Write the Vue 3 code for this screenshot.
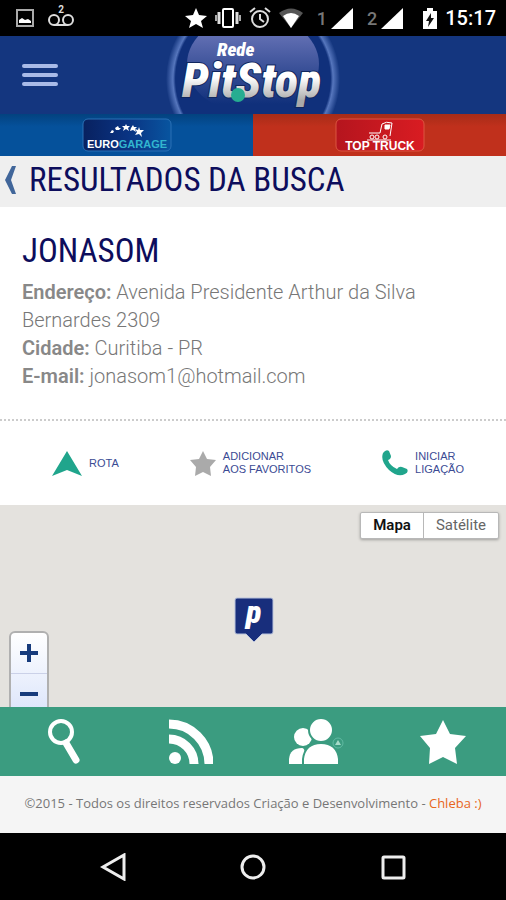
<script setup>
import { ref } from 'vue';

const mapType = ref('mapa');

const store = {
  name: 'JONASOM',
  address: 'Avenida Presidente Arthur da Silva Bernardes 2309',
  city: 'Curitiba - PR',
  email: 'jonasom1@hotmail.com'
};
</script>

<template>
  <div class="screen">
    <!-- Status bar -->
    <div class="status">
      <svg width="18" height="18" viewBox="0 0 18 18">
        <rect x="1" y="1" width="16" height="16" fill="none" stroke="#aaa" stroke-width="2" />
        <path d="M3 14v-3l3-2 3 2 3-1 3 2v2z" fill="#fff" />
      </svg>
      <svg class="voicemail" width="26" height="22" viewBox="0 0 26 22">
        <g fill="none" stroke="#ddd" stroke-width="2">
          <circle cx="6" cy="15" r="5" />
          <circle cx="20" cy="15" r="5" />
          <path d="M6 20h14" />
        </g>
        <text x="13" y="8" text-anchor="middle" font-size="10" font-weight="700" fill="#ddd">2</text>
      </svg>
      <div class="status-right">
        <svg width="22" height="20" viewBox="0 0 22 20">
          <path d="M11 0l3 7 8 1-6 5 2 7-7-4-7 4 2-7-6-5 8-1z" fill="#fff" />
        </svg>
        <svg width="26" height="20" viewBox="0 0 26 20">
          <rect x="8" y="1" width="10" height="18" rx="1" fill="none" stroke="#fff" stroke-width="2" />
          <path d="M4 4v12M22 4v12" stroke="#ddd" stroke-width="3" />
          <path d="M1 7v6M25 7v6" stroke="#aaa" stroke-width="2" />
        </svg>
        <svg width="22" height="22" viewBox="0 0 22 22" fill="none" stroke="#ddd" stroke-width="2">
          <circle cx="11" cy="12" r="8" />
          <path d="M11 7v5l4 3M1 5l5-4M21 5l-5-4" />
        </svg>
        <svg width="24" height="20" viewBox="0 0 24 20">
          <path d="M0 5Q12-4 24 5L12 20z" fill="#555" />
          <path d="M4 8q8-6 16 0l-8 12z" fill="#fff" />
        </svg>
        <span class="sim">
          <small>1</small>
          <svg width="22" height="21" viewBox="0 0 22 21"><path d="M22 0v21H0z" fill="#fff" /></svg>
        </span>
        <span class="sim">
          <small>2</small>
          <svg width="22" height="21" viewBox="0 0 22 21"><path d="M22 0v21H0z" fill="#fff" /></svg>
        </span>
        <svg class="battery" width="14" height="21" viewBox="0 0 14 21">
          <path d="M0 3h4V0h6v3h4v18H0z" fill="#fff" />
          <path d="M8 5l-5 8h3l-1 6 6-9H8z" fill="#111" />
        </svg>
        <span class="clock">15:17</span>
      </div>
    </div>

    <!-- Header -->
    <header class="header">
      <button class="menu" aria-label="Menu">
        <span></span>
        <span></span>
        <span></span>
      </button>
      <svg class="logo" width="180" height="78" viewBox="0 0 180 78" role="img" aria-label="Rede PitStop">
        <defs>
          <radialGradient id="ring">
            <stop offset="0.89" stop-color="#10307b" />
            <stop offset="0.92" stop-color="#5676bd" />
            <stop offset="1" stop-color="#14367f" />
          </radialGradient>
          <linearGradient id="gloss" x1="0" y1="0" x2="0" y2="1">
            <stop offset="0.2" stop-color="#6370b4" />
            <stop offset="0.9" stop-color="#10307b" />
          </linearGradient>
          <linearGradient id="metal" x1="0" y1="0" x2="0" y2="1">
            <stop offset="0.45" stop-color="#fff" />
            <stop offset="0.85" stop-color="#aaa" />
          </linearGradient>
        </defs>
        <circle cx="90" cy="43" r="87" fill="url(#ring)" />
        <ellipse cx="90" cy="28" rx="66" ry="50" fill="url(#gloss)" />
        <text class="logo-small" x="54" y="20" font-size="19">Rede</text>
        <text class="logo-big" x="19" y="61" font-size="48">PitStop</text>
        <circle cx="75" cy="59" r="7" fill="#26ad91" />
      </svg>
    </header>

    <!-- Partner brands -->
    <nav class="brands">
      <a href="#" class="brand euro" aria-label="Eurogarage">
        <svg width="90" height="34" viewBox="0 0 90 34">
          <defs>
            <linearGradient id="euroBg" x1="0" x2="1">
              <stop offset="0" stop-color="#08215f" />
              <stop offset="0.5" stop-color="#0a3382" />
              <stop offset="1" stop-color="#0855a0" />
            </linearGradient>
          </defs>
          <rect x="1" y="1" width="88" height="32" rx="5" fill="url(#euroBg)" stroke="#2a70b5" />
          <g fill="#fff">
            <path d="M44 6l1 2h3l-2 2 1 3-3-2-3 2 1-3-2-2h3z" />
            <path d="M57 9l1 3 4 0-3 3 1 4-3-3-4 1 2-3-2-3 3 1z" />
            <path d="M36 8l1 2 2 0-2 2-3 0-1-2z" />
            <path d="M30 12l2 1-1 2-3 0z" />
            <path d="M51 7l1 2 3 0-2 2 1 3-3-2-3 1 1-3z" />
          </g>
          <text x="45" y="30" text-anchor="middle" class="brand-text" font-size="11" fill="#fff">EURO<tspan fill="#32b6cf">GARAGE</tspan></text>
        </svg>
      </a>
      <a href="#" class="brand truck" aria-label="Top Truck">
        <svg width="90" height="34" viewBox="0 0 90 34">
          <defs>
            <linearGradient id="truckBg" x1="0" x2="1">
              <stop offset="0" stop-color="#b5151e" />
              <stop offset="1" stop-color="#d91c22" />
            </linearGradient>
          </defs>
          <rect x="1" y="1" width="88" height="32" rx="5" fill="url(#truckBg)" stroke="#dc5540" />
          <g fill="none" stroke="#fff" stroke-width="1">
            <path d="M34 15h11l2-9q4-3 10-1l-2 13M32 22h24" />
            <path d="M50 7h5l-1 4h-4z" fill="#fff" />
            <circle cx="37" cy="19" r="2" />
            <circle cx="42" cy="19" r="2" />
            <circle cx="50" cy="19" r="2" />
          </g>
          <text x="45" y="32" text-anchor="middle" class="brand-text" font-size="12" fill="#fff">TOP TRUCK</text>
        </svg>
      </a>
    </nav>

    <!-- Page title -->
    <div class="title-bar">
      <button class="back" aria-label="Voltar">
        <svg width="11" height="28" viewBox="0 0 11 28">
          <path d="M7 0h4L6 14l5 14H7L0 14z" fill="#41669a" />
        </svg>
      </button>
      <h1>RESULTADOS DA BUSCA</h1>
    </div>

    <section class="details">
      <h2>{{ store.name }}</h2>
      <p><strong>Endereço:</strong> {{ store.address }}</p>
      <p><strong>Cidade:</strong> {{ store.city }}</p>
      <p><strong>E-mail:</strong> {{ store.email }}</p>
    </section>

    <div class="actions">
      <button class="action">
        <svg width="30" height="25" viewBox="0 0 30 25">
          <path d="M15 0l15 25-15-6-15 6z" fill="#20a58c" />
        </svg>
        <span>ROTA</span>
      </button>
      <button class="action">
        <svg width="26" height="25" viewBox="0 0 26 25">
          <path d="M13 0l4 8 9 1-6 7 1 9-8-4-8 4 1-9-6-7 9-1z" fill="#aaa" />
        </svg>
        <span>ADICIONAR<br />AOS FAVORITOS</span>
      </button>
      <button class="action">
        <svg width="26" height="26" viewBox="0 0 26 26">
          <path d="M1 3q3-4 6-2l2 5q0 3-3 4 2 6 9 9 2-3 5-2l5 2q2 3-2 5-7 4-16-4Q-2 11 1 3z" fill="#20a58c" />
        </svg>
        <span>INICIAR<br />LIGAÇÃO</span>
      </button>
    </div>

    <!-- Map -->
    <section class="map">
      <div class="map-types">
        <button :class="{ active: mapType === 'mapa' }" @click="mapType = 'mapa'">Mapa</button>
        <button :class="{ active: mapType === 'satelite' }" @click="mapType = 'satelite'">Satélite</button>
      </div>
      <svg class="pin" width="42" height="50" viewBox="0 0 42 50">
        <path d="M4 2h34q2 0 2 2v32q0 2-2 2h-9l-8 8-8-8H4q-2 0-2-2V4q0-2 2-2z" fill="#182e7c" stroke="#b9c3dc" />
        <text class="logo-small pin-text" x="13" y="27" font-size="32">p</text>
      </svg>
      <div class="zoom">
        <button aria-label="Aumentar zoom">
          <svg width="20" height="20" viewBox="0 0 20 20"><path d="M10 1v18M1 10h18" stroke="#173b7c" stroke-width="4" /></svg>
        </button>
        <button aria-label="Diminuir zoom">
          <svg width="20" height="20" viewBox="0 0 20 20"><path d="M1 10h18" stroke="#173b7c" stroke-width="4" /></svg>
        </button>
      </div>
    </section>

    <!-- Bottom tabs -->
    <nav class="tabs">
      <a href="#" aria-label="Buscar">
        <svg width="46" height="46" viewBox="0 0 46 46" fill="none" stroke="#fff">
          <circle cx="21" cy="13" r="11" stroke-width="4" />
          <path d="M26 24l10 17" stroke-width="7" stroke-linecap="round" />
        </svg>
      </a>
      <a href="#" aria-label="Notícias">
        <svg width="46" height="46" viewBox="0 0 46 46">
          <circle cx="8" cy="39" r="6" fill="#fff" />
          <path d="M2 5a40 40 0 0 1 40 40M2 20a25 25 0 0 1 25 25" fill="none" stroke="#fff" stroke-width="9" />
        </svg>
      </a>
      <a href="#" aria-label="Amigos">
        <svg width="56" height="46" viewBox="0 0 56 46" fill="#fff">
          <circle cx="15" cy="18" r="9" />
          <path d="M1 45V40Q2 29 14 29q4 0 4 16z" />
          <g stroke="#3b9c80" stroke-width="2">
            <circle cx="33" cy="11" r="12" />
            <path d="M15 46V40Q17 24 33 24t18 16v6z" />
          </g>
          <circle cx="50" cy="24" r="5" fill="none" stroke="#61bba3" />
          <path d="M47 26l3-5 3 5z" fill="#a5dac8" />
        </svg>
      </a>
      <a href="#" aria-label="Favoritos">
        <svg width="46" height="44" viewBox="0 0 46 44">
          <path d="M23 0l7 14 16 2-11 12 2 16-14-7-14 7 1-16L0 16l16-2z" fill="#fff" />
        </svg>
      </a>
    </nav>

    <footer class="footer">©2015 - Todos os direitos reservados Criação e Desenvolvimento - <a href="#">Chleba :)</a></footer>

    <!-- System navigation -->
    <div class="system">
      <button aria-label="Voltar">
        <svg width="26" height="28" viewBox="0 0 26 28"><path d="M24 2v24L3 14z" /></svg>
      </button>
      <button aria-label="Início">
        <svg width="26" height="28" viewBox="0 0 26 28"><circle cx="13" cy="14" r="11" /></svg>
      </button>
      <button aria-label="Recentes">
        <svg width="26" height="28" viewBox="0 0 26 28"><rect x="3" y="4" width="21" height="21" rx="1" /></svg>
      </button>
    </div>
  </div>
</template>

<style>
body {
  margin: 0;
  background: #fff;
}
</style>

<style scoped>
.screen {
  display: flex;
  flex-direction: column;
  min-height: 100vh;
  font-family: Roboto, 'Liberation Sans', sans-serif;
  background: #fff;
}
svg {
  display: block;
  flex-shrink: 0;
}
button {
  padding: 0;
  border: 0;
  background: none;
  font-family: inherit;
  cursor: pointer;
}
a {
  text-decoration: none;
}

.status {
  display: flex;
  align-items: center;
  height: 36px;
  padding: 0 10px 0 16px;
  gap: 14px;
  color: #fff;
  background: #000;
}
.voicemail {
  margin-bottom: 4px;
}
.status-right {
  display: flex;
  align-items: center;
  margin-left: auto;
  gap: 8px;
}
.sim {
  display: flex;
  align-items: flex-end;
  gap: 4px;
  margin-left: 6px;
}
.sim small {
  color: #777;
  font-size: 18px;
  font-weight: 500;
  line-height: 20px;
}
.battery {
  margin-left: 12px;
}
.clock {
  font-size: 20px;
  font-weight: 500;
}

.header {
  display: grid;
  grid-template-columns: 1fr auto 1fr;
  align-items: center;
  height: 78px;
  background: #14367f;
}
.menu {
  display: flex;
  flex-direction: column;
  width: 36px;
  margin-left: 22px;
  gap: 5px;
}
.menu span {
  height: 4px;
  border-radius: 2px;
  background: #a9bbe8;
}
.logo-small,
.logo-big {
  font-family: 'Liberation Sans Narrow', 'Roboto Condensed', sans-serif;
  font-weight: 900;
  font-style: italic;
  fill: #fff;
}
.logo-big {
  fill: url(#metal);
  stroke: #10265e;
  stroke-width: 2px;
  paint-order: stroke;
}

.brands {
  display: grid;
  grid-template-columns: 1fr 1fr;
}
.brand {
  display: flex;
  justify-content: center;
  padding: 4px 0;
}
.euro {
  background: linear-gradient(#03427f, #05519b 30%);
}
.truck {
  background: linear-gradient(#a62c18, #c0301c 30%);
}
.brand-text {
  font-family: 'Liberation Sans', sans-serif;
  font-weight: 700;
}

.title-bar {
  display: flex;
  align-items: center;
  box-sizing: border-box;
  height: 51px;
  padding: 0 5px 4px;
  gap: 13px;
  background: #efefef;
}
h1,
h2 {
  margin: 0;
  font-family: 'Liberation Sans Narrow', 'Roboto Condensed', sans-serif;
  font-size: 33px;
  font-weight: 400;
  line-height: 44px;
  color: #0d0d5c;
}

.details {
  padding: 22px 22px 29px;
  border-bottom: 2px dotted #ccc;
}
.details h2 {
  margin-bottom: 5px;
}
.details p {
  margin: 0;
  font-size: 20px;
  font-weight: 300;
  line-height: 28px;
  color: #777;
}
.details strong {
  font-weight: 600;
  color: #888;
}

.actions {
  display: flex;
  justify-content: space-between;
  align-items: center;
  height: 84px;
  padding: 0 42px 0 52px;
}
.action {
  display: flex;
  align-items: center;
  gap: 7px;
  font-family: 'Liberation Sans', sans-serif;
  font-size: 11px;
  line-height: 13px;
  text-align: left;
  color: #3b4b94;
}

.map {
  position: relative;
  flex: 1;
  min-height: 202px;
  overflow: hidden;
  background: #e4e2de;
}
.map-types {
  position: absolute;
  top: 7px;
  right: 7px;
  display: flex;
  border: 1px solid #b8b8b8;
  border-radius: 2px;
  background: #fff;
  box-shadow: 0 1px 3px rgba(0, 0, 0, 0.3);
}
.map-types button {
  padding: 0 12px;
  font-size: 15px;
  line-height: 25px;
  color: #666;
}
.map-types button + button {
  border-left: 1px solid #b8b8b8;
}
.map-types .active {
  font-weight: 600;
  color: #111;
}
.pin {
  position: absolute;
  top: 91px;
  left: calc(50% + 1px);
  transform: translateX(-50%);
}
.zoom {
  position: absolute;
  top: 126px;
  left: 9px;
  width: 36px;
  border: 2px solid #b0b0b0;
  border-radius: 6px;
  background: linear-gradient(#fff, #dce5fb);
}
.zoom button {
  display: flex;
  justify-content: center;
  align-items: center;
  width: 100%;
  height: 40px;
}
.zoom button + button {
  border-top: 1px solid #cbd1e8;
}

.tabs {
  display: grid;
  grid-template-columns: repeat(4, 1fr);
  height: 69px;
  background: #3b9c80;
}
.tabs a {
  display: flex;
  justify-content: center;
  align-items: center;
}

.footer {
  height: 57px;
  text-align: center;
  font-family: 'Open Sans', 'Noto Sans', sans-serif;
  font-size: 13px;
  line-height: 54px;
  color: #777;
  background: #f5f5f5;
}
.footer a {
  color: #e8661b;
}

.system {
  display: flex;
  justify-content: center;
  align-items: center;
  height: 67px;
  gap: 114px;
  background: #000;
}
.system svg {
  fill: none;
  stroke: #eee;
  stroke-width: 3px;
}
</style>
